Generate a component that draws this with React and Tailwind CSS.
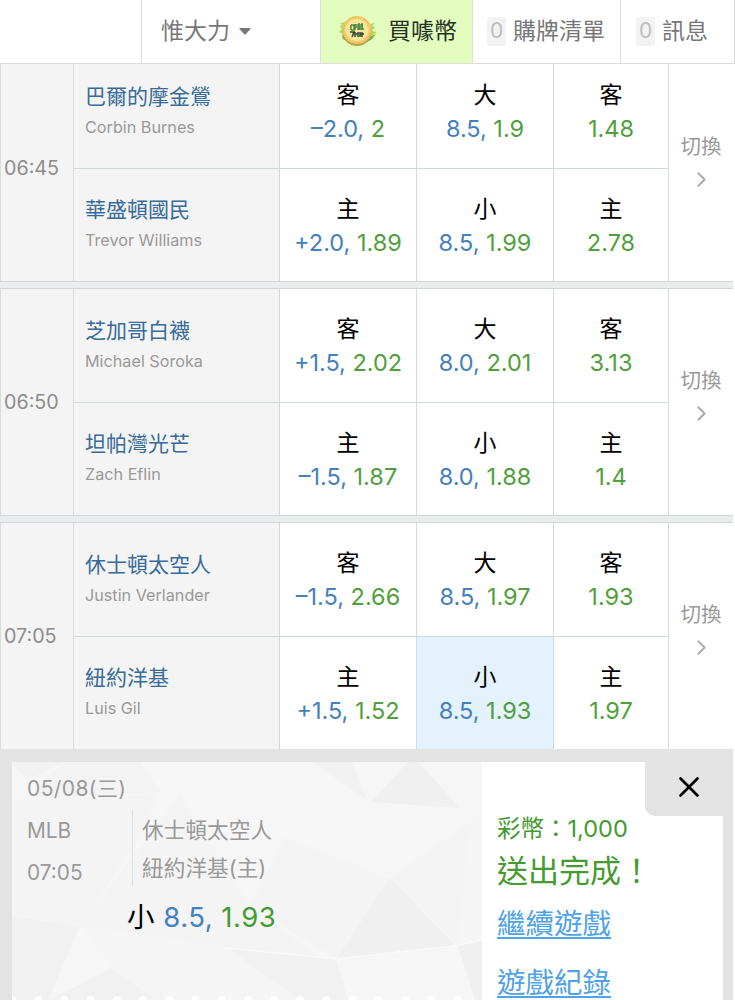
import React from "react";
import { ChevronRight, X } from "lucide-react";

const games = [
  {
    time: "06:45",
    rows: [
      { team: "巴爾的摩金鶯", pitcher: "Corbin Burnes", side: "客", spread: "–2.0,", spreadOdds: "2", ou: "大", total: "8.5,", totalOdds: "1.9", win: "1.48" },
      { team: "華盛頓國民", pitcher: "Trevor Williams", side: "主", spread: "+2.0,", spreadOdds: "1.89", ou: "小", total: "8.5,", totalOdds: "1.99", win: "2.78" },
    ],
  },
  {
    time: "06:50",
    rows: [
      { team: "芝加哥白襪", pitcher: "Michael Soroka", side: "客", spread: "+1.5,", spreadOdds: "2.02", ou: "大", total: "8.0,", totalOdds: "2.01", win: "3.13" },
      { team: "坦帕灣光芒", pitcher: "Zach Eflin", side: "主", spread: "–1.5,", spreadOdds: "1.87", ou: "小", total: "8.0,", totalOdds: "1.88", win: "1.4" },
    ],
  },
  {
    time: "07:05",
    rows: [
      { team: "休士頓太空人", pitcher: "Justin Verlander", side: "客", spread: "–1.5,", spreadOdds: "2.66", ou: "大", total: "8.5,", totalOdds: "1.97", win: "1.93" },
      { team: "紐約洋基", pitcher: "Luis Gil", side: "主", spread: "+1.5,", spreadOdds: "1.52", ou: "小", total: "8.5,", totalOdds: "1.93", win: "1.97", selected: true },
    ],
  },
];

function Bet({ label, line, odds, selected, className }) {
  return (
    <div className={`border-r border-[#d3dde0] pt-[23px] text-center leading-[34px] ${selected ? "bg-[#e3f2fc]" : "bg-white"} ${className}`}>
      <div className="text-[23px] text-black">{label}</div>
      <div className="whitespace-nowrap text-[23.5px]">
        {line && <span className="text-[#4480bb]">{line} </span>}
        <span className="text-[#4f9f3c]">{odds}</span>
      </div>
    </div>
  );
}

function Game({ game }) {
  return (
    <section className="flex h-[228px] w-[733px] border-y border-[#d0d6d8]">
      <div className="flex w-[74px] shrink-0 items-center border-x border-[#d8dadb] bg-[#f4f4f4] pt-px pl-[3px] text-[19.7px] text-[#8c8c8c]">
        {game.time}
      </div>
      <div className="w-[595px] shrink-0">
        {game.rows.map((r, i) => (
          <div key={r.team} className={`flex ${i === 0 ? "h-[114px] border-b border-[#d0d8da]" : "h-[112px]"}`}>
            <div className={`w-[206px] shrink-0 border-r border-[#d3d8da] bg-[#f4f4f4] pl-[11px] leading-[31px] ${i === 0 ? "pt-[26px]" : "pt-[25px]"}`}>
              <div className="text-[21px] text-[#376b99]">{r.team}</div>
              <div className="text-[16.2px] text-[#999]">{r.pitcher}</div>
            </div>
            <Bet className="w-[137px]" label={r.side} line={r.spread} odds={r.spreadOdds} />
            <Bet className="w-[137px]" label={r.ou} line={r.total} odds={r.totalOdds} selected={r.selected} />
            <Bet className="w-[115px]" label={r.side} odds={r.win} />
          </div>
        ))}
      </div>
      <div className="flex flex-1 flex-col items-center bg-white pt-[76px] text-[#999]">
        <span className="text-[20.5px] leading-[32px]">切換</span>
        <ChevronRight className="mt-[4px] text-[#aaa]" size={25} strokeWidth={1.8} />
      </div>
    </section>
  );
}

function CoinLogo() {
  return (
    <svg width="42" height="34" viewBox="0 0 42 34">
      <path d="M2 10l8-3-1 2 6-3 16 1 1 3 6-1-3 3 3 1-3 4 5 1-4 3 1 3-8 3H11l-6-4 1-3-4-2 3-3-2-2 2-3z" fill="#a9dc62" />
      <path d="M5 21l5 2 3 6-7-4zM31 24l8-4-5 6-8 4z" fill="#86ad4c" />
      <ellipse cx="20" cy="18" rx="14.5" ry="14" fill="#b2a348" />
      <ellipse cx="20" cy="16" rx="14.5" ry="14" fill="#f2cc66" />
      <ellipse cx="20" cy="16" rx="11.5" ry="11" fill="#fae69b" />
      <ellipse cx="20" cy="16" rx="13.5" ry="13" fill="none" stroke="#f0a850" strokeWidth="1" strokeDasharray="1.2 1.8" />
      <g fill="none" strokeWidth="1.5">
        <path d="M14 11v5M14 11h3v5h-3M18 10v6M18 11h8M22 9v7M25 9v7M20 15h7M18 13h8" stroke="#4d8a3c" />
        <path d="M13 18h4l-2 5M18 18v5M18 20h3M21 18v5M23 18v5M25 18v5M23 20h4" stroke="#2d4a36" />
      </g>
    </svg>
  );
}

function Count() {
  return <span className="flex h-[29px] w-[19px] items-center justify-center rounded-[2px] bg-[#f3f3f3] text-[21px] text-[#bdbdbd]">0</span>;
}

function Header() {
  return (
    <header className="relative z-10 flex h-[64px] shrink-0 border-b border-[#dcdcdc] bg-white text-[23px] whitespace-nowrap text-[#777]">
      <div className="w-[142px] border-r border-[#ddd]" />
      <div className="flex w-[179px] items-center gap-[9px] border-r border-[#ddd] pb-[1px] pl-[19px]">
        惟大力
        <svg width="12" height="7" viewBox="0 0 12 7"><path d="M1 0h10q1 0 .5 1L6.7 6.3q-.7.7-1.4 0L.5 1Q0 0 1 0z" fill="#777" /></svg>
      </div>
      <div className="flex w-[152px] items-center gap-[9px] border-r border-[#ddd] bg-[#e3fdbf] pb-[1px] pl-[16px] text-[#24301f]">
        <CoinLogo />
        買噱幣
      </div>
      <div className="flex w-[148px] items-center gap-[7px] border-r border-[#ddd] pb-[1px] pl-[14px]">
        <Count />
        購牌清單
      </div>
      <div className="flex w-[114px] items-center gap-[7px] border-r border-[#ddd] pb-[1px] pl-[15px]">
        <Count />
        訊息
      </div>
    </header>
  );
}

function Facets() {
  return (
    <svg className="absolute inset-0" width="470" height="238" viewBox="12 762 470 238">
      <path d="M12 762H482V1000H12z" fill="#f6f6f6" />
      <path d="M12 762H64L28 780z" fill="#f2f2f2" />
      <path d="M64 762H140L160 792 28 799z" fill="#f3f3f3" />
      <path d="M160 794L130 852 80 925 12 915V800z" fill="#f4f4f4" />
      <path d="M12 916L80 926 48 1000H12z" fill="#f1f1f1" />
      <path d="M80 926L225 946 320 958 250 905 180 795z" fill="#f4f4f4" />
      <path d="M112 968L155 1000H50z" fill="#f1f1f1" />
      <path d="M112 968L80 926 225 946 300 1000H155z" fill="#f5f5f5" />
      <path d="M225 946L336 960 348 1000H300z" fill="#f1f1f1" />
      <path d="M313 762H352L368 801z" fill="#f2f2f2" />
      <path d="M408 762H418L460 808 371 802z" fill="#f0f0f0" />
      <path d="M285 837L390 878 336 958 250 906z" fill="#f4f4f4" />
      <path d="M390 878L455 945 337 958z" fill="#f0f0f0" />
      <path d="M390 878L470 822 458 945z" fill="#f4f4f4" />
      <path d="M470 822L482 812V938L458 945z" fill="#f5f5f5" />
      <path d="M458 946L482 940V1000H475z" fill="#f0f0f0" />
      <path d="M225 948L337 959 455 946 482 940" fill="none" stroke="#f9f9f9" strokeWidth="1.5" />
      <g fill="#fff">
        {Array.from({ length: 18 }, (_, i) => (
          <circle key={i} cx={12 + i * 26.2} cy="1000" r="4" />
        ))}
      </g>
    </svg>
  );
}

function Slip() {
  return (
    <aside className="relative flex h-[251px] w-[733px] bg-[#e3e3e3] pt-[13px] pr-[10px] pl-[12px]">
      <div className="relative w-[470px] shrink-0 overflow-hidden">
        <Facets />
        <div className="relative pl-[15px] text-[#999]">
          <div className="pt-[10px] text-[21px] leading-[34px] tracking-[0.4px]">05/08(三)</div>
          <div className="mt-[4px] flex">
            <div className="w-[106px] border-r border-[#ddd] text-[20.8px] leading-[42px]">
              <div className="h-[38px]">MLB</div>
              <div className="h-[38px] pt-[4px]">07:05</div>
            </div>
            <div className="pl-[9px] pt-px text-[21.7px] leading-[38px]">
              <div>休士頓太空人</div>
              <div className="-mb-px">紐約洋基(主)</div>
            </div>
          </div>
          <div className="pt-[11px] pl-[100px] text-[27.5px] leading-[40px] tracking-[0.5px]">
            <span className="text-black">小</span>{" "}
            <span className="text-[#4181c4]">8.5,</span>{" "}
            <span className="text-[#3f9d2f]">1.93</span>
          </div>
        </div>
      </div>
      <div className="flex-1 overflow-hidden bg-white pt-[50px] pl-[15px] whitespace-nowrap text-[#459a30]">
        <div className="text-[23.5px] leading-[34px]">彩幣：1,000</div>
        <div className="text-[31px] leading-[50px]">送出完成！</div>
        <a className="mt-[6px] block text-[28.5px] leading-[44px] text-[#4fa2e5] underline decoration-2 underline-offset-[3px]">繼續遊戲</a>
        <a className="mt-[15px] block text-[28.5px] leading-[44px] text-[#4fa2e5] underline decoration-2 underline-offset-[3px]">遊戲紀錄</a>
      </div>
      <button className="absolute top-0 right-0 flex h-[67px] w-[88px] items-center justify-center rounded-bl-[10px] bg-[#e3e3e3] pt-[9px] text-black">
        <X size={34} strokeWidth={1.9} />
      </button>
    </aside>
  );
}

export default function App() {
  return (
    <div className="flex h-[1000px] w-[735px] flex-col overflow-hidden bg-white font-['Inter','Noto_Sans_CJK_TC',sans-serif] font-normal">
      <Header />
      <main className="h-[685px] shrink-0 overflow-hidden">
        <div className="-mt-[10px] flex w-[733px] flex-col gap-[6px] bg-[#ebeced]">
          {games.map((g) => (
            <Game key={g.time} game={g} />
          ))}
        </div>
      </main>
      <Slip />
    </div>
  );
}
